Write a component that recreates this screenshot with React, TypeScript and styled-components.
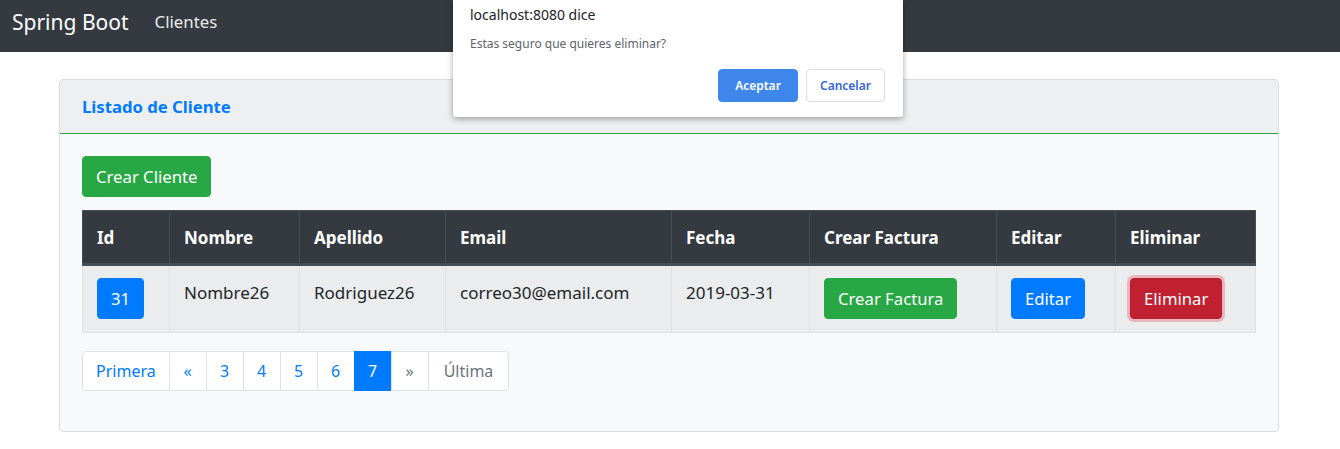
import styled, { createGlobalStyle } from "styled-components";

const GlobalStyle = createGlobalStyle`
  body {
    margin: 0;
    background: #fff;
    font-family: "Noto Sans", "Open Sans", sans-serif;
    color: #212529;
  }
`;

const clientes = [
  { id: 31, nombre: "Nombre26", apellido: "Rodriguez26", email: "correo30@email.com", fecha: "2019-03-31" },
];

const pages = ["3", "4", "5", "6", "7"];

function App() {
  return (
    <>
      <GlobalStyle />
      <Navbar>
        <Brand>Spring Boot</Brand>
        <NavLink>Clientes</NavLink>
      </Navbar>
      <Main>
        <Card>
          <CardHeader>Listado de Cliente</CardHeader>
          <CardBody>
            <Button variant="success">Crear Cliente</Button>
            <Table>
              <thead>
                <tr>
                  <Th width={87}>Id</Th>
                  <Th width={130}>Nombre</Th>
                  <Th width={146}>Apellido</Th>
                  <Th width={226}>Email</Th>
                  <Th width={138}>Fecha</Th>
                  <Th width={187}>Crear Factura</Th>
                  <Th width={119}>Editar</Th>
                  <Th>Eliminar</Th>
                </tr>
              </thead>
              <tbody>
                {clientes.map((c) => (
                  <tr key={c.id}>
                    <Td>
                      <Button variant="primary">{c.id}</Button>
                    </Td>
                    <Td>{c.nombre}</Td>
                    <Td>{c.apellido}</Td>
                    <Td>{c.email}</Td>
                    <Td>{c.fecha}</Td>
                    <Td>
                      <Button variant="success">Crear Factura</Button>
                    </Td>
                    <Td>
                      <Button variant="primary">Editar</Button>
                    </Td>
                    <Td>
                      <Button variant="danger" focused>Eliminar</Button>
                    </Td>
                  </tr>
                ))}
              </tbody>
            </Table>
            <Pagination>
              <PageItem>Primera</PageItem>
              <PageItem>&laquo;</PageItem>
              {pages.map((p) => (
                <PageItem key={p} active={p === "7"}>{p}</PageItem>
              ))}
              <PageItem disabled>&raquo;</PageItem>
              <PageItem disabled wide>Última</PageItem>
            </Pagination>
          </CardBody>
        </Card>
      </Main>
      <Dialog>
        <DialogTitle>localhost:8080 dice</DialogTitle>
        <DialogMessage>Estas seguro que quieres eliminar?</DialogMessage>
        <DialogActions>
          <DialogButton primary>Aceptar</DialogButton>
          <DialogButton>Cancelar</DialogButton>
        </DialogActions>
      </Dialog>
    </>
  );
}

const Navbar = styled.nav`
  height: 52px;
  box-sizing: border-box;
  background: #343a40;
  display: flex;
  align-items: flex-start;
  padding: 7px 12px 0;
`;

const Brand = styled.span`
  color: #fff;
  font-size: 21px;
  line-height: 30px;
  margin-right: 26px;
`;

const NavLink = styled.span`
  color: rgba(255, 255, 255, 0.92);
  font-size: 16.8px;
  line-height: 30px;
`;

const Main = styled.main`
  padding: 27px 61px 0 59px;
`;

const Card = styled.div`
  border: 1px solid #dcdcdc;
  border-radius: 4px;
  background: #f8f9fa;
  overflow: hidden;
`;

const CardHeader = styled.div`
  height: 54px;
  box-sizing: border-box;
  display: flex;
  align-items: center;
  padding: 0 22px 1px;
  background: #eeeff1;
  border-bottom: 1px solid #28a745;
  color: #007bff;
  font-weight: 700;
  font-size: 16.7px;
`;

const CardBody = styled.div`
  padding: 22px 22px 40px;
`;

const variants = {
  primary: "#007bff",
  success: "#28a745",
  danger: "#dc3545",
};

const Button = styled.button<{ variant: keyof typeof variants; focused?: boolean }>`
  font-family: inherit;
  font-size: 16.7px;
  line-height: 25px;
  padding: 7px 13px;
  border-radius: 4px;
  color: #fff;
  background: ${(p) => (p.focused ? "#c0202f" : variants[p.variant])};
  border: 1px solid ${(p) => (p.focused ? "#b21f2d" : variants[p.variant])};
  box-shadow: ${(p) => (p.focused ? "0 0 0 3px rgba(225, 83, 97, 0.35)" : "none")};
  cursor: pointer;
`;

const Table = styled.table`
  width: 100%;
  margin-top: 13px;
  border-collapse: collapse;
  font-size: 17px;
`;

const Th = styled.th<{ width?: number }>`
  width: ${(p) => (p.width ? `${p.width}px` : "auto")};
  box-sizing: border-box;
  background: #343a40;
  color: #fff;
  text-align: left;
  font-weight: 700;
  height: 54px;
  padding: 0 14px;
  border: 1px solid #454d55;
  border-bottom: 3px solid #454d55;
`;

const Td = styled.td`
  background: #ebeced;
  border: 1px solid #dee2e6;
  padding: 12px 14px 11px;
  vertical-align: top;
  height: 43px;
  line-height: 30px;
`;

const Pagination = styled.ul`
  display: flex;
  list-style: none;
  margin: 18px 0 0;
  padding: 0;
`;

const PageItem = styled.li<{ active?: boolean; disabled?: boolean; wide?: boolean }>`
  height: 40px;
  min-width: 38px;
  box-sizing: border-box;
  display: flex;
  align-items: center;
  justify-content: center;
  padding: 0 ${(p) => (p.wide ? "15px" : "13px")};
  font-size: 16px;
  background: ${(p) => (p.active ? "#007bff" : "#fff")};
  color: ${(p) => (p.active ? "#fff" : p.disabled ? "#6c757d" : "#007bff")};
  border: 1px solid ${(p) => (p.active ? "#007bff" : "#dee2e6")};
  margin-left: -1px;
  &:first-child {
    margin-left: 0;
    border-radius: 4px 0 0 4px;
  }
  &:last-child {
    border-radius: 0 4px 4px 0;
  }
`;

const Dialog = styled.div`
  position: absolute;
  top: 0;
  left: 453px;
  width: 450px;
  height: 117px;
  box-sizing: border-box;
  background: #fff;
  border-radius: 0 0 3px 3px;
  box-shadow: 0 2px 6px rgba(0, 0, 0, 0.35);
  padding: 5px 18px 0 17px;
  font-family: "Noto Sans", "Open Sans", sans-serif;
`;

const DialogTitle = styled.div`
  font-size: 14px;
  line-height: 20px;
  color: #202124;
`;

const DialogMessage = styled.div`
  margin-top: 9px;
  font-size: 12px;
  line-height: 20px;
  color: #5f6368;
`;

const DialogActions = styled.div`
  display: flex;
  justify-content: flex-end;
  gap: 8px;
  margin-top: 15px;
`;

const DialogButton = styled.button<{ primary?: boolean }>`
  width: ${(p) => (p.primary ? "80px" : "79px")};
  height: 33px;
  font-family: inherit;
  font-size: 12px;
  font-weight: 600;
  border-radius: 4px;
  background: ${(p) => (p.primary ? "#3e86ea" : "#fff")};
  color: ${(p) => (p.primary ? "#fff" : "#3367d6")};
  border: 1px solid ${(p) => (p.primary ? "#3e86ea" : "#dadce0")};
`;

export default App;
